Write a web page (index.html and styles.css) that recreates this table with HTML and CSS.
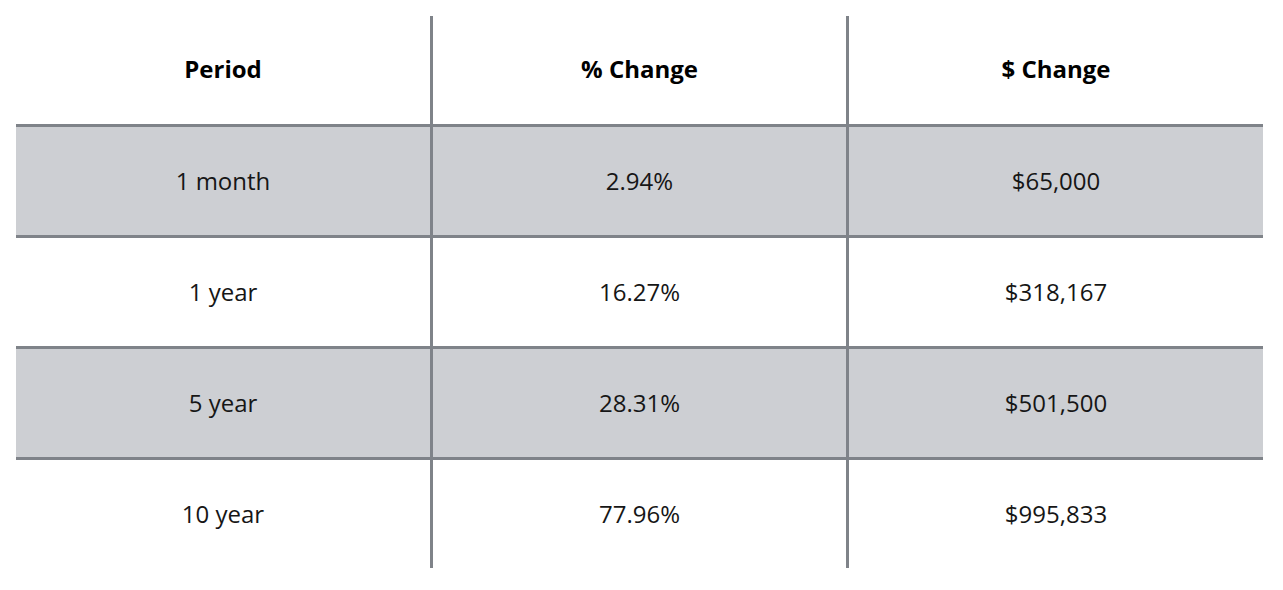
FILE: index.html
```html
<!DOCTYPE html>
<html lang="en">
<head>
<meta charset="utf-8">
<title>Change table</title>
<link rel="stylesheet" href="styles.css">
</head>
<body>
<div class="table">
  <div class="row head">
    <div class="cell">Period</div>
    <div class="cell">% Change</div>
    <div class="cell">$ Change</div>
  </div>
  <div class="row shaded">
    <div class="cell">1 month</div>
    <div class="cell">2.94%</div>
    <div class="cell">$65,000</div>
  </div>
  <div class="row">
    <div class="cell">1 year</div>
    <div class="cell">16.27%</div>
    <div class="cell">$318,167</div>
  </div>
  <div class="row shaded">
    <div class="cell">5 year</div>
    <div class="cell">28.31%</div>
    <div class="cell">$501,500</div>
  </div>
  <div class="row">
    <div class="cell">10 year</div>
    <div class="cell">77.96%</div>
    <div class="cell">$995,833</div>
  </div>
</div>
</body>
</html>
```
FILE: styles.css
```css
html, body {
  margin: 0;
  padding: 0;
  background: #ffffff;
}
body {
  font-family: "Open Sans", "Liberation Sans", sans-serif;
  color: #161616;
}
.table {
  margin: 16px 0 0 16px;
  width: 1247px;
}
.row {
  display: grid;
  grid-template-columns: 414px 416px 417px;
  height: 108px;
}
.row + .row {
  border-top: 3px solid #7f8389;
}
.row.shaded {
  background: #cdcfd3;
}
.cell {
  display: flex;
  align-items: center;
  justify-content: center;
  font-size: 24px;
  font-weight: 400;
  box-sizing: border-box;
  padding-bottom: 2px;
}
.cell + .cell {
  border-left: 3px solid #7f8389;
}
.head .cell {
  font-weight: 700;
  color: #000000;
  padding-bottom: 4px;
}
```
